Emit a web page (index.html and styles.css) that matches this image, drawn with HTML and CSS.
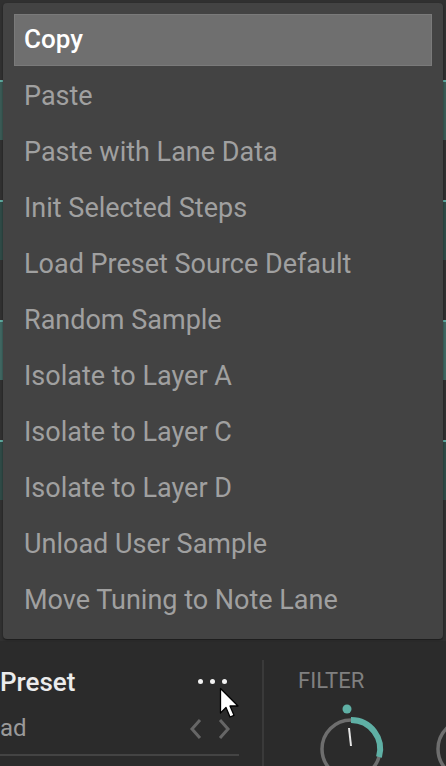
FILE: index.html
```html
<!DOCTYPE html>
<html>
<head>
<meta charset="utf-8">
<link rel="stylesheet" href="styles.css">
</head>
<body>
<div class="app">
  <div class="upper">
    <div class="strip strip-a"></div>
    <div class="strip strip-b"></div>
    <div class="strip strip-c"></div>
    <div class="strip strip-d"></div>
    <div class="menu">
      <div class="item active">Copy</div>
      <div class="item">Paste</div>
      <div class="item">Paste with Lane Data</div>
      <div class="item">Init Selected Steps</div>
      <div class="item">Load Preset Source Default</div>
      <div class="item">Random Sample</div>
      <div class="item">Isolate to Layer A</div>
      <div class="item">Isolate to Layer C</div>
      <div class="item">Isolate to Layer D</div>
      <div class="item">Unload User Sample</div>
      <div class="item">Move Tuning to Note Lane</div>
    </div>
  </div>
  <div class="lower">
    <div class="preset">
      <div class="preset-top">
        <span class="preset-title">Preset</span>
        <span class="dots"><i></i><i></i><i></i></span>
      </div>
      <div class="preset-bottom">
        <span class="preset-name">ad</span>
        <span class="chevrons">
          <svg width="14" height="22" viewBox="0 0 14 22"><path d="M11 2 L3 11 L11 20" fill="none" stroke="#666" stroke-width="3"/></svg>
          <svg width="14" height="22" viewBox="0 0 14 22"><path d="M3 2 L11 11 L3 20" fill="none" stroke="#666" stroke-width="3"/></svg>
        </span>
      </div>
    </div>
    <div class="divider"></div>
    <div class="filter">
      <div class="filter-label">FILTER</div>
      <div class="knobs">
        <svg class="knob" width="80" height="70" viewBox="0 0 80 70">
          <circle cx="32" cy="7" r="4.5" fill="#5fb0a5"/>
          <circle cx="36" cy="47" r="29" fill="none" stroke="#6e6e6e" stroke-width="3.5"/>
          <path d="M36 18 A29 29 0 0 1 64 55" fill="none" stroke="#5fb0a5" stroke-width="6"/>
          <line x1="34" y1="26" x2="36" y2="44" stroke="#e6e6e6" stroke-width="2"/>
        </svg>
        <svg class="knob2" width="10" height="70" viewBox="0 0 10 70">
          <circle cx="31" cy="47" r="29" fill="none" stroke="#6e6e6e" stroke-width="3.5"/>
        </svg>
      </div>
    </div>
    <svg class="cursor" width="22" height="34" viewBox="0 0 22 34">
      <path d="M1.5 1.5 L1.5 26 L7 20.5 L11 30 L15 28.3 L11 19 L19 19 Z" fill="#fff" stroke="#000" stroke-width="1.3" stroke-linejoin="round"/>
    </svg>
  </div>
</div>
</body>
</html>
```
FILE: styles.css
```css
* { box-sizing: border-box; }
html, body { margin: 0; padding: 0; }
body {
  width: 446px;
  height: 766px;
  overflow: hidden;
  background: #2b2b2b;
  font-family: Roboto, "Noto Sans", sans-serif;
}
.app {
  position: relative;
  width: 446px;
  height: 766px;
}
.upper {
  position: relative;
  height: 641px;
  background: #303030;
  display: flex;
  flex-direction: column;
  padding-top: 80px;
  gap: 60px;
}
.strip {
  height: 60px;
  background: #3a5a55;
  border-top: 2px solid #5fa89e;
}
.strip-b { background: #2f4a46; }
.strip-c { background: #3f6661; }
.strip-d { background: #2f4a46; }
.menu {
  position: absolute;
  left: 3px;
  top: 3px;
  width: 440px;
  height: 636px;
  background: #434343;
  border-radius: 4px;
  padding: 11px;
  display: flex;
  flex-direction: column;
  gap: 4px;
  box-shadow: 0 1px 2px rgba(0,0,0,0.5);
}
.item {
  height: 52px;
  line-height: 52px;
  padding-left: 10px;
  font-size: 27px;
  color: #a0a0a0;
  white-space: nowrap;
}
.item.active {
  background: #6f6f6f;
  border: 1px solid #7a7a7a;
  line-height: 48px;
  padding-left: 9px;
  font-size: 26px;
  color: #ffffff;
  font-weight: 500;
}
.lower {
  position: relative;
  height: 125px;
  display: flex;
  padding-top: 19px;
}
.preset {
  width: 262px;
  display: flex;
  flex-direction: column;
}
.preset-top {
  width: 239px;
  height: 46px;
  display: flex;
  align-items: center;
  justify-content: space-between;
}
.preset-title {
  font-size: 26px;
  font-weight: 500;
  color: #ececec;
  margin-top: -2px;
}
.dots {
  display: flex;
  gap: 7px;
  margin-right: 12px;
  margin-top: -4px;
}
.dots i {
  display: block;
  width: 5px;
  height: 5px;
  border-radius: 50%;
  background: #f2f2f2;
}
.preset-bottom {
  width: 239px;
  height: 50px;
  display: flex;
  align-items: center;
  justify-content: space-between;
  border-bottom: 2px solid #444;
}
.preset-name {
  font-size: 24px;
  color: #9a9a9a;
  margin-top: -4px;
}
.chevrons {
  display: flex;
  gap: 14px;
  margin-right: 8px;
  margin-top: -2px;
}
.chevrons svg { display: block; }
.divider {
  width: 2px;
  background: #3a3a3a;
}
.filter {
  flex: 1;
  padding-left: 34px;
  padding-top: 9px;
  display: flex;
  flex-direction: column;
}
.filter-label {
  font-size: 22px;
  color: #808080;
  line-height: 24px;
}
.knobs {
  display: flex;
  margin-top: 9px;
  margin-left: 17px;
  justify-content: space-between;
}
.knob, .knob2 { display: block; }
.cursor {
  position: absolute;
  left: 219px;
  top: 46px;
}
```
